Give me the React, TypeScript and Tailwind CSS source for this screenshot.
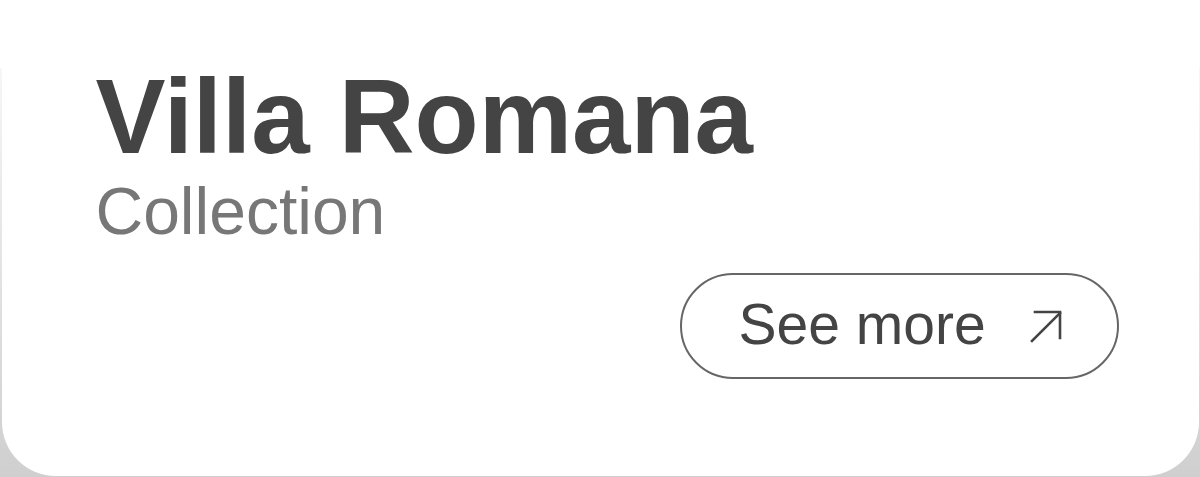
import React from 'react';

const ArrowIcon: React.FC = () => (
  <svg width="34" height="34" viewBox="0 0 34 34" fill="none" stroke="#444444" strokeWidth="2.6" strokeLinecap="square">
    <path d="M3 32 L31 4" />
    <path d="M6 3 H31 V29" />
  </svg>
);

export default function App() {
  return (
    <div className="w-[1200px] h-[477px] bg-[linear-gradient(to_bottom,#ffffff_0px,#ffffff_68px,#f6f6f6_69px,#cfcfcf_477px)] px-[1.5px]">
      <div
        className="h-[476px] bg-white rounded-b-[54px] pt-[64px] pl-[94px] flex flex-col"
        style={{ fontFamily: '"Liberation Sans", Arial, sans-serif' }}
      >
        <h1 className="text-[105px] leading-none font-bold text-[#444444]">Villa Romana</h1>
        <p className="mt-[9px] text-[66px] leading-none text-[#777777]">Collection</p>
        <button className="mt-[29px] ml-[584px] w-[439px] h-[106px] rounded-full border-2 border-[#666666] flex items-center pl-[57px] pr-[54px] text-[#444444]">
          <span className="text-[57px] leading-none -mt-[3px]">See more</span>
          <span className="ml-auto flex items-center">
            <ArrowIcon />
          </span>
        </button>
      </div>
    </div>
  );
}
